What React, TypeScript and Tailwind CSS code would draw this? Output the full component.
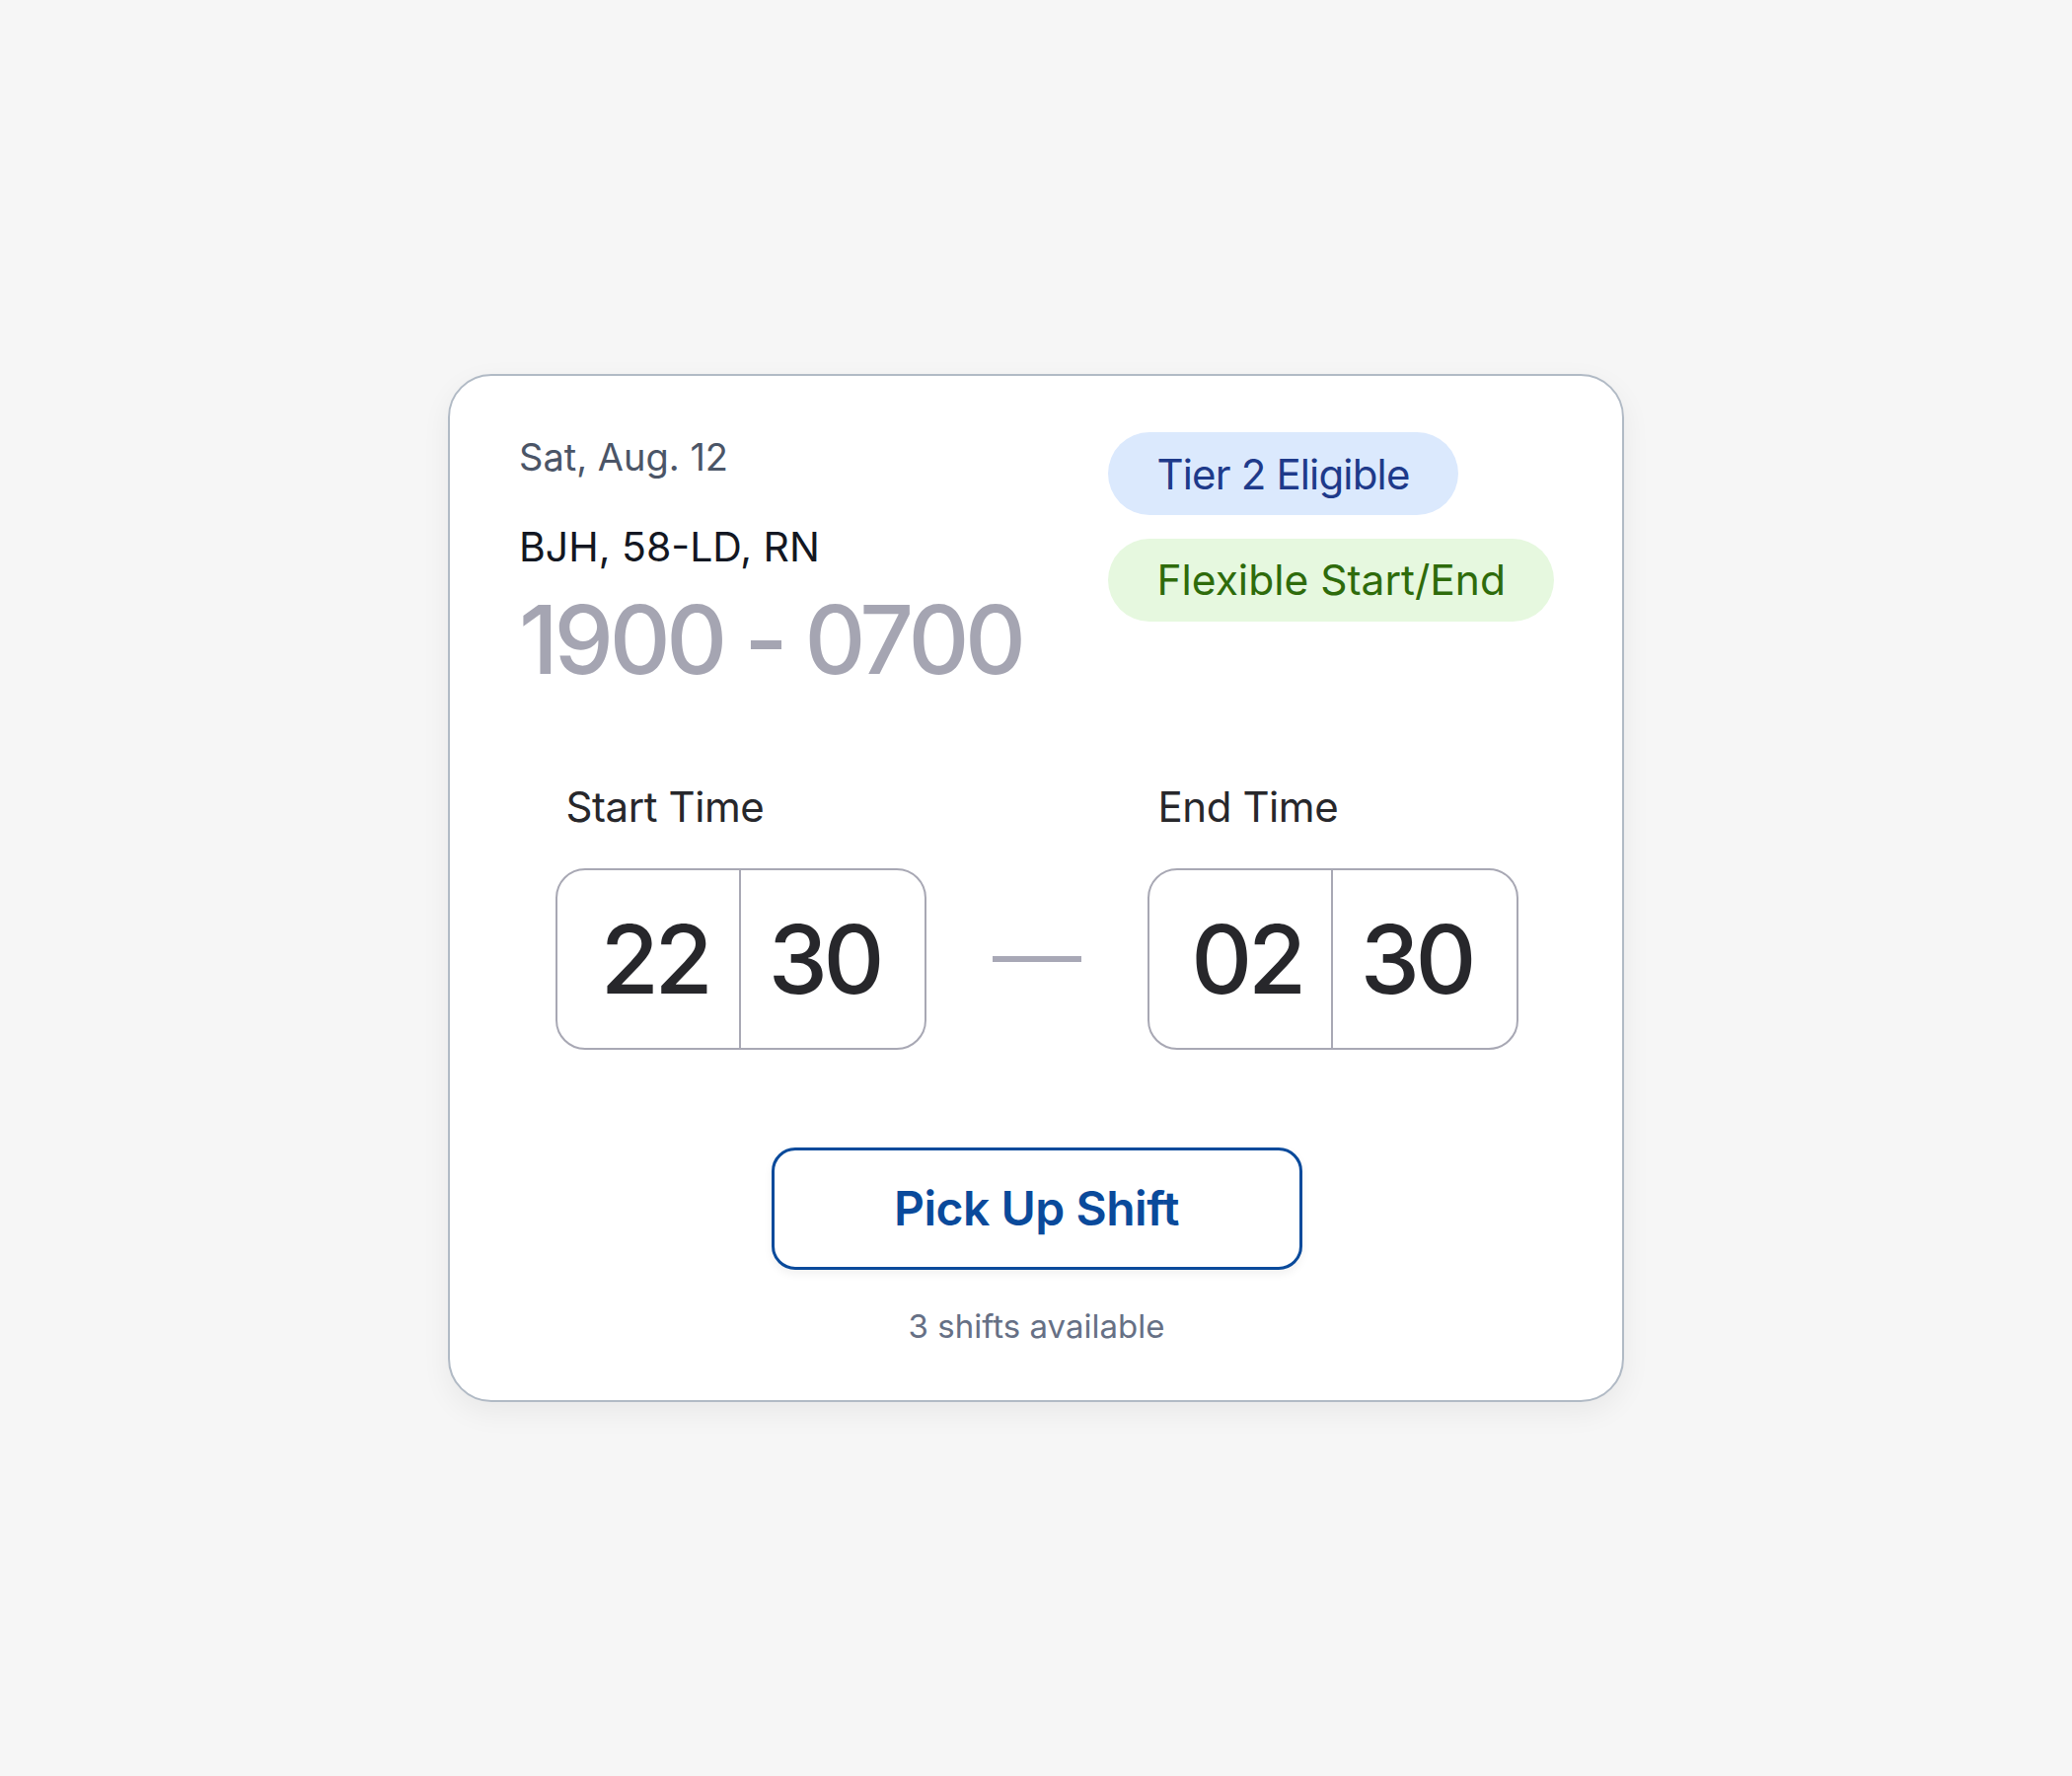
import React from "react";

function TimeBox({ label, hours, minutes }: { label: string; hours: string; minutes: string }) {
  return (
    <div className="flex flex-col">
      <p className="pl-[11px] text-[42px] leading-[50px] tracking-[-0.01em] text-[#27272b]">{label}</p>
      <div className="mt-[37px] flex h-[184px] w-[376px] overflow-hidden rounded-[30px] border-2 border-[#a8a8b4] bg-white">
        <div className="flex flex-1 items-center justify-center border-r-2 border-[#a8a8b4] pl-[14px]">
          <span className="text-[96px] font-medium leading-none tracking-[-0.045em] text-[#27272b]">{hours}</span>
        </div>
        <div className="flex flex-1 items-center justify-center pr-[16px]">
          <span className="text-[96px] font-medium leading-none tracking-[-0.045em] text-[#27272b]">{minutes}</span>
        </div>
      </div>
    </div>
  );
}

export default function App() {
  return (
    <div className="flex min-h-screen items-center justify-center bg-[#f6f6f6] font-['Inter','Noto_Sans',sans-serif]">
      {/* Shift card */}
      <div className="w-[1192px] rounded-[44px] border-2 border-[#b1bac5] bg-white pt-[59px] pb-[55px] pl-[70px] pr-[69px] shadow-[0_10px_30px_rgba(0,0,0,0.06)]">
        {/* Header */}
        <div className="flex items-start justify-between">
          <div className="flex flex-col">
            <p className="text-[38px] leading-[46px] text-[#4b5567]">Sat, Aug. 12</p>
            <p className="mt-[44px] text-[41px] leading-[48px] text-[#131722]">BJH, 58-LD, RN</p>
            <p className="mt-[22px] text-[96px] font-medium leading-none tracking-[-0.045em] text-[#a5a5b2]">1900 - 0700</p>
          </div>
          <div className="-mt-[2px] flex flex-col items-start gap-[24px]">
            <span className="flex h-[84px] items-center rounded-full bg-[#dbe9fd] px-[49px] text-[42px] tracking-[-0.02em] text-[#1e3a8a]">
              Tier 2 Eligible
            </span>
            <span className="flex h-[84px] items-center rounded-full bg-[#e6f8df] px-[49px] text-[42.5px] text-[#2e6b0b]">
              Flexible Start/End
            </span>
          </div>
        </div>

        {/* Start / end pickers */}
        <div className="mt-[97px] flex items-end justify-center">
          <TimeBox label="Start Time" hours="22" minutes="30" />
          <div className="mx-[67px] flex h-[184px] items-center">
            <div className="h-[6px] w-[90px] bg-[#a8a8b6]" />
          </div>
          <TimeBox label="End Time" hours="02" minutes="30" />
        </div>

        {/* Action */}
        <div className="mt-[99px] flex flex-col items-center">
          <button className="flex h-[124px] w-[538px] items-center justify-center rounded-[24px] border-[3px] border-[#0a4a9b] bg-white text-[48px] font-semibold tracking-[-0.01em] text-[#0a4a9b] shadow-[0_4px_10px_rgba(0,0,0,0.06)]">
            Pick Up Shift
          </button>
          <p className="mt-[37px] text-[33px] leading-[40px] text-[#667085]">3 shifts available</p>
        </div>
      </div>
    </div>
  );
}
